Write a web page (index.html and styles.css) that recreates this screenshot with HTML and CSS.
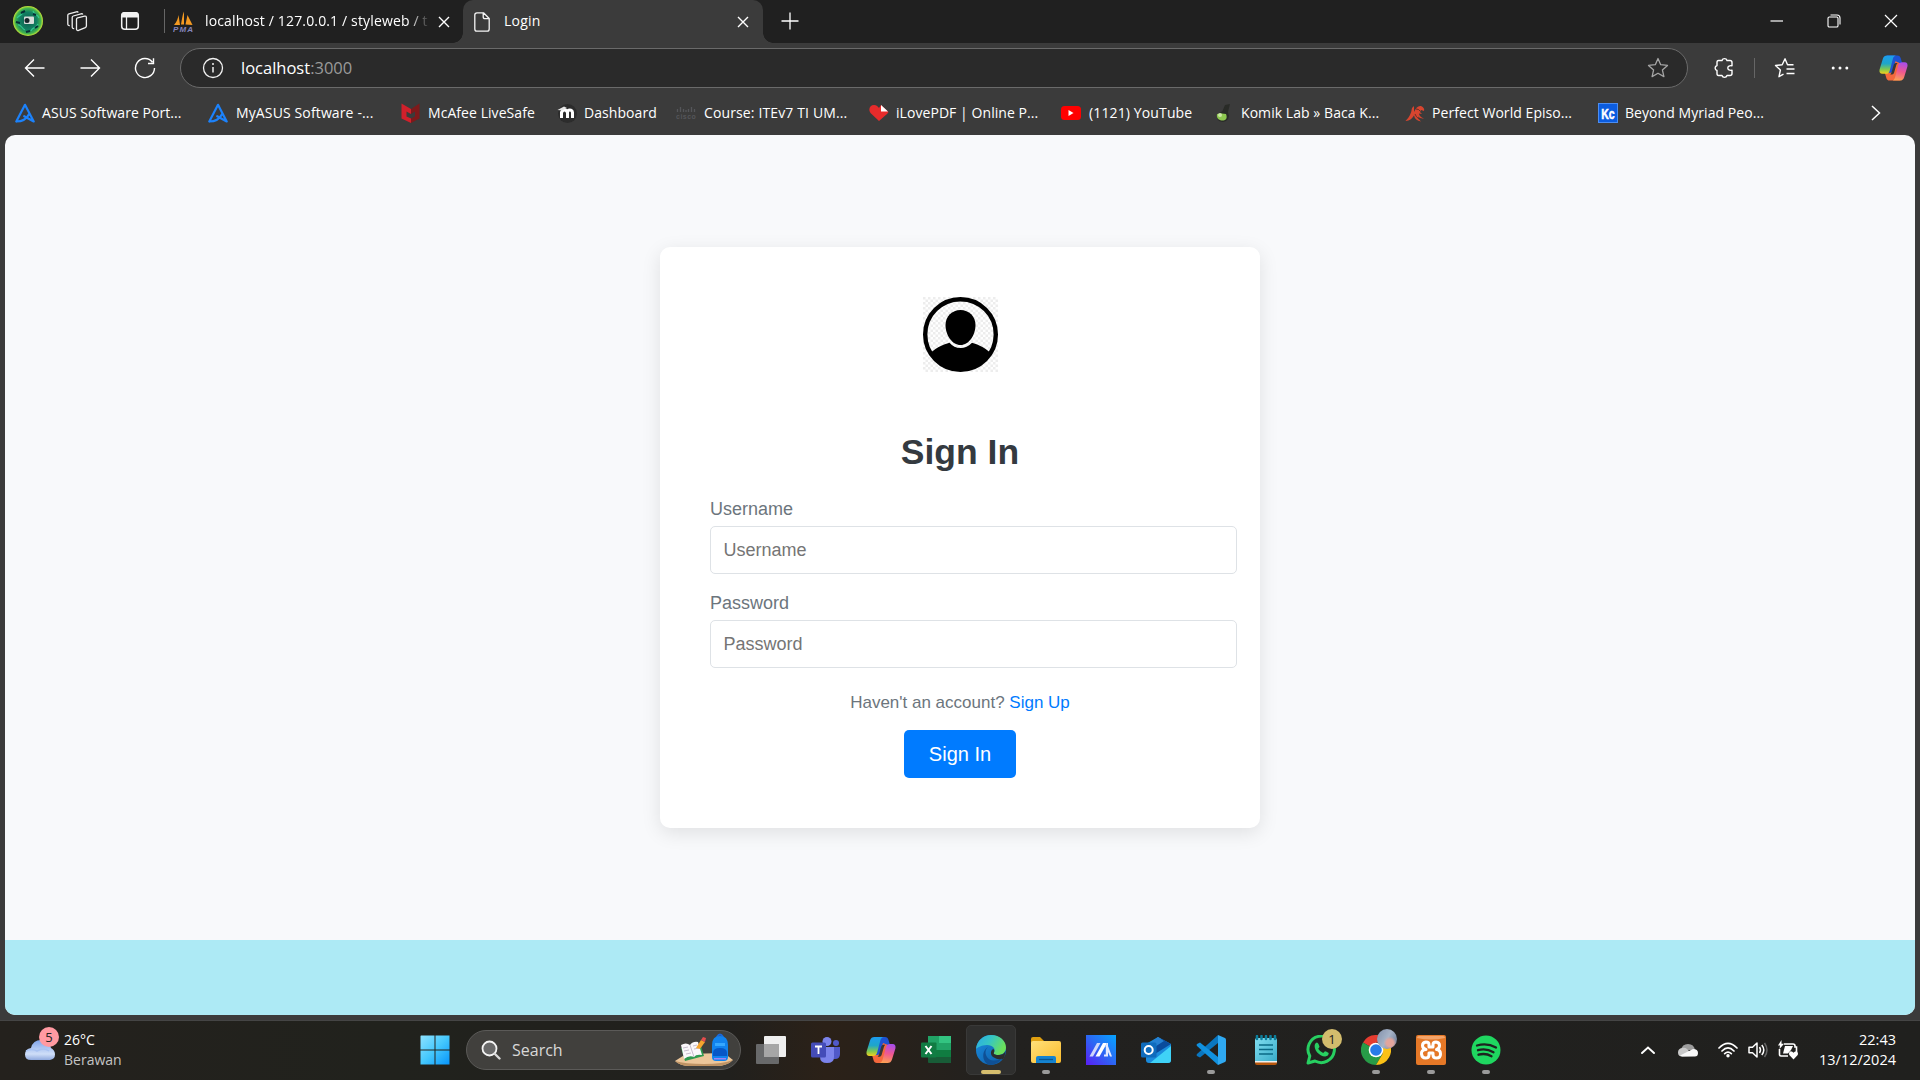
FILE: index.html
```html
<!DOCTYPE html>
<html lang="en">
<head>
<meta charset="utf-8">
<title>Login</title>
<link rel="stylesheet" href="styles.css">
</head>
<body>
<svg class="defs" width="0" height="0" aria-hidden="true">
  <defs>
    <linearGradient id="cpBlue" x1="0" y1="0" x2="0" y2="1"><stop offset="0" stop-color="#1c9cf0"/><stop offset=".45" stop-color="#1fa6c8"/><stop offset=".75" stop-color="#7fc950"/><stop offset="1" stop-color="#f4cf1c"/></linearGradient>
    <linearGradient id="cpPink" x1=".6" y1="0" x2=".4" y2="1"><stop offset="0" stop-color="#a84dea"/><stop offset=".5" stop-color="#f0588f"/><stop offset="1" stop-color="#fda053"/></linearGradient>
    <linearGradient id="win" x1="0" y1="0" x2="1" y2="1"><stop offset="0" stop-color="#8ee2ff"/><stop offset=".5" stop-color="#45c8fd"/><stop offset="1" stop-color="#0795fb"/></linearGradient>
    <linearGradient id="edgeTop" x1="0" y1="0" x2="1" y2=".4"><stop offset="0" stop-color="#2aa9e8"/><stop offset=".5" stop-color="#36c6c4"/><stop offset="1" stop-color="#6be05a"/></linearGradient>
    <linearGradient id="edgeLow" x1="0" y1="0" x2="1" y2="1"><stop offset="0" stop-color="#1b8ee0"/><stop offset="1" stop-color="#0c59a4"/></linearGradient>
    <linearGradient id="folder" x1="0" y1="0" x2="1" y2="1"><stop offset="0" stop-color="#ffe07a"/><stop offset="1" stop-color="#fbbc2c"/></linearGradient>
    <linearGradient id="asus" x1="0" y1="1" x2="1" y2="0"><stop offset="0" stop-color="#5a1df5"/><stop offset=".5" stop-color="#2c67f4"/><stop offset="1" stop-color="#05a5ff"/></linearGradient>
    <linearGradient id="cloud" x1="0" y1="0" x2="0" y2="1"><stop offset="0" stop-color="#7fa4ea"/><stop offset=".7" stop-color="#cfdef8"/><stop offset="1" stop-color="#8fa9de"/></linearGradient>
    <linearGradient id="note" x1="0" y1="0" x2="1" y2="1"><stop offset="0" stop-color="#82def0"/><stop offset="1" stop-color="#38acc9"/></linearGradient>
    <radialGradient id="avatar"><stop offset="0" stop-color="#0c5a4c"/><stop offset=".6" stop-color="#138263"/><stop offset=".85" stop-color="#44b44d"/><stop offset="1" stop-color="#c8e637"/></radialGradient>
    <pattern id="checker" width="5" height="5" patternUnits="userSpaceOnUse"><rect width="5" height="5" fill="#fff"/><path d="M0 0h2.500v2.500H0zM2.500 2.500H5V5H2.500z" fill="#ededed"/></pattern>
    <symbol id="copilot" viewBox="0 0 30 28">
      <path d="M8 1h11c2 0 3 1.300 3.500 3l1.500 5h-4c-2 0-3 1-3.500 3L13 22c-1 2-2 3-4 3z" fill="#1d52d2"/>
      <path d="M22 27H11c-2 0-3-1.200-3.500-3L6 19h5c2 0 3-1 3.500-3L17 7l5 2z" fill="#f4683c"/>
      <path d="M8.500 1H18c-2 0-3 1.500-3.500 3L11 17c-.6 2-2 3-4 3H3.500C1 20 0 18 .6 15.500L4 4.500C4.700 2 6.200 1 8.500 1z" fill="url(#cpBlue)"/>
      <path d="M21.500 27H13c2 0 3-1.500 3.500-3L20 11c.6-2 2-3 4-3h2.500c2.500 0 3.500 2 2.900 4.500L26 23.500c-.7 2.500-2.200 3.500-4.500 3.500z" fill="url(#cpPink)"/>
      <path d="M15.300 10.500q.5-1.700 2-1.700h2q-1 .8-1.400 2.200l-2.300 8q-.5 1.700-2 1.700h-2q1-.8 1.400-2.200z" fill="#383735"/>
    </symbol>
    <symbol id="asusA" viewBox="0 0 20 20"><path d="M1.300 18.500 10 1.800l8.700 16.700-9.500-5.300M1.300 18.500c6 0 10-2 12.500-7" fill="none" stroke="#1c82fb" stroke-width="2.200" stroke-linejoin="round" stroke-linecap="round"/></symbol>
    <symbol id="cross" viewBox="0 0 12 12"><path d="M1 1l10 10M11 1 1 11" fill="none" stroke="#fff" stroke-width="1.400"/></symbol>
  </defs>
</svg>

<header class="tabstrip">
  <svg class="avatar" width="30" height="30" viewBox="0 0 30 30"><circle cx="15" cy="15" r="15" fill="url(#avatar)"/><g fill="none" stroke="#33c98e" stroke-width="1.200"><path d="M4 12c3-4 5-2 6-6M20 5c1 4 5 3 6 7M5 19c3-1 4 4 7 5M18 25c1-4 6-3 7-7"/></g><path d="M8 7l4-2M3 16l4 1M22 22l3-2M13 26l4-1M20 8l3 1" stroke="#062f36" stroke-width="2"/><rect x="11" y="10.500" width="10" height="7.500" rx="1" fill="#d7ddda"/><circle cx="14" cy="14.500" r="2.500" fill="#17262b"/></svg>
  <svg class="workspaces" width="22" height="22" viewBox="0 0 22 22" fill="none" stroke="#eee" stroke-width="1.300" stroke-linejoin="round"><path d="M10.500 9.300c0-.8.4-1.300 1.100-1.500l7-1.700c1-.2 1.800.4 1.800 1.400v8.600c0 .8-.4 1.300-1.100 1.600l-6.800 2.700c-1.100.4-2-.2-2-1.300zM8.200 18.500c-1.200.2-2-.4-2-1.500V7.500c0-.8.4-1.300 1.100-1.500L15 3.800c.8-.2 1.500 0 1.800.8M3.800 15.500c-1.200.2-2-.4-2-1.500V5.300c0-.8.4-1.300 1.100-1.500l7.500-2c.8-.2 1.500 0 1.800.8"/></svg>
  <svg class="tabmenu" width="20" height="20" viewBox="0 0 20 20"><rect x="1.700" y="1.700" width="16.600" height="16.600" rx="3" fill="none" stroke="#f2f2f2" stroke-width="1.500"/><path d="M1.500 6.500V4q0-3 3-3h11q3 0 3 3v2.500z" fill="#f2f2f2"/><path d="M6.500 6v12" stroke="#f2f2f2" stroke-width="1.300"/></svg>
  <i class="strip-rule"></i>
  <div class="tab tab-idle">
    <svg width="20" height="22" viewBox="0 0 20 22"><path d="M1 14C4 11 5 7 5.500 4L7 14zM8 13.500c1-5 1.300-9.500 3-13v13zM12.500 13.500l2-9.500 3 6 2 4z" fill="#f49a22"/><text x="0" y="20.500" textLength="20" class="pma">PMA</text></svg>
    <span class="tab-title fade">localhost / 127.0.0.1 / styleweb / t</span>
    <svg width="12" height="12"><use href="#cross"/></svg>
  </div>
  <div class="tab tab-active">
    <svg width="16" height="20" viewBox="0 0 16 20" fill="none" stroke="#f5f5f5" stroke-width="1.300" stroke-linejoin="round"><path d="M3 .8h6.500l5.700 5.700V17q0 2.200-2.200 2.200H3Q.8 19.200.8 17V3Q.8.800 3 .8zM9.200 1v4q0 1.700 1.700 1.700h4.200"/></svg>
    <span class="tab-title">Login</span>
    <svg width="12" height="12"><use href="#cross"/></svg>
  </div>
  <svg class="newtab" width="18" height="18" viewBox="0 0 18 18"><path d="M9 .5v17M.5 9h17" stroke="#fff" stroke-width="1.300"/></svg>
  <div class="winctl">
    <svg width="14" height="14" viewBox="0 0 14 14"><path d="M.5 7h12.500" stroke="#fff" stroke-width="1.200"/></svg>
    <svg width="14" height="14" viewBox="0 0 14 14" fill="none" stroke="#fff" stroke-width="1.100"><rect x="1" y="3" width="10" height="10" rx="1.300"/><path d="M3.500 1H10q3 0 3 3v6.500"/></svg>
    <svg width="14" height="14" viewBox="0 0 14 14"><path d="M1 1l12 12M13 1 1 13" stroke="#fff" stroke-width="1.200"/></svg>
  </div>
</header>

<nav class="toolbar">
  <svg width="22" height="20" viewBox="0 0 22 20" fill="none" stroke="#fff" stroke-width="1.400"><path d="M20.500 10H1.500M10 1.500 1.500 10l8.500 8.500"/></svg>
  <svg width="22" height="20" viewBox="0 0 22 20" fill="none" stroke="#fff" stroke-width="1.400"><path d="M1.500 10h19M12 1.500l8.500 8.500-8.500 8.500"/></svg>
  <svg width="22" height="22" viewBox="0 0 22 22" fill="none" stroke="#fff" stroke-width="1.400"><path d="M18.500 5.200A9.500 9.500 0 1 0 20.500 11M19.500 1.200v5.300H14"/></svg>
  <div class="omnibox">
    <svg width="22" height="22" viewBox="0 0 22 22"><circle cx="11" cy="11" r="9.500" fill="none" stroke="#f2f2f2" stroke-width="1.300"/><path d="M11 10v5.500" stroke="#f2f2f2" stroke-width="1.500"/><circle cx="11" cy="7" r="1" fill="#f2f2f2"/></svg>
    <span class="url">localhost<em>:3000</em></span>
    <svg width="22" height="22" viewBox="0 0 22 22"><path d="M11 1.500l2.700 6.200 6.800.7-5.100 4.500 1.500 6.700L11 16.200l-5.900 3.400 1.500-6.700L1.500 8.400l6.800-.7z" fill="none" stroke="#a5a5a5" stroke-width="1.300" stroke-linejoin="round"/></svg>
  </div>
  <svg class="puzzle" width="20" height="22" viewBox="0 0 20 22"><path d="M4.500 3.500H8a2.600 2.600 0 0 1 5 0h3q2 0 2 2v3.300c-2.500-.5-4.200.5-4.200 2.200s1.700 2.700 4.200 2.200v3.300q0 2-2 2h-3a2.600 2.600 0 0 1-5 0H4.500q-1.500 0-1.500-2v-3a2.600 2.600 0 0 1 0-5v-3q0-2 1.500-2z" fill="none" stroke="#fff" stroke-width="1.400" stroke-linejoin="round"/></svg>
  <i class="tool-rule"></i>
  <svg class="favs" width="22" height="22" viewBox="0 0 22 22" fill="none" stroke="#fff" stroke-width="1.400" stroke-linejoin="round"><path d="M19.500 7.800h-6L11 1.800 8.200 7.700l-6.700.8 4.900 4.500L5 19.700l4.500-2.500M12.500 12h8M12.500 16.500h8"/></svg>
  <svg class="dots" width="18" height="6" viewBox="0 0 18 6" fill="#fff"><circle cx="2.200" cy="3" r="1.500"/><circle cx="9" cy="3" r="1.500"/><circle cx="15.800" cy="3" r="1.500"/></svg>
  <svg class="side-copilot" width="29" height="28"><use href="#copilot"/></svg>
</nav>

<div class="bookmarks">
  <a class="bm"><svg width="20" height="20"><use href="#asusA"/></svg><span>ASUS Software Port...</span></a>
  <a class="bm wide"><svg width="20" height="20"><use href="#asusA"/></svg><span>MyASUS Software -...</span></a>
  <a class="bm"><svg width="20" height="20" viewBox="0 0 20 20"><path d="M.5.500 10 6v5L5.500 8.500v5L10 15.500V20L.5 15.500z" fill="#d0202b"/><path d="M18.500.500 10 6v5l4-2.500v5l-4 2V20l8.500-4.500z" fill="#7d1a1b"/></svg><span>McAfee LiveSafe</span></a>
  <a class="bm"><svg width="20" height="20" viewBox="0 0 20 20"><circle cx="10.500" cy="10.500" r="9.500" fill="#2c2c2c"/><path d="M4.500 15V8.500M10.500 15V9.500q0-2.500 2.300-2.500t2.700 2.500V15M4.500 10q.5-3 3-3t3 3" fill="none" stroke="#fff" stroke-width="3"/><path d="M.5 7 7 3.500 10 5 5 7.500z" fill="#e6e6e6"/></svg><span>Dashboard</span></a>
  <a class="bm wide"><svg width="20" height="20" viewBox="0 0 20 20"><path d="M1.500 6v3M4.500 4v5M7.500 6v3M10 7v2M12.500 6v3M15.500 4v5M18.500 6v3" stroke="#55565a" stroke-width="1.300"/><text x="0" y="16" textLength="20" class="cisco">cisco</text></svg><span>Course: ITEv7 TI UM...</span></a>
  <a class="bm"><svg width="20" height="20" viewBox="0 0 20 20"><path d="M10 18 2 10.500C-1.500 6.500 1 2 5 2c2.500 0 4 1.500 5 3l2-3 7.500 7q-.5 1-1.500 2z" fill="#e62b2b"/><path d="M12 2v6.500h7z" fill="#fff"/></svg><span>iLovePDF | Online P...</span></a>
  <a class="bm wide"><svg width="20" height="20" viewBox="0 0 20 20"><rect x="0" y="3" width="20" height="14" rx="3.500" fill="#f00"/><path d="M7.500 7v6l5-3z" fill="#fff"/></svg><span>(1121) YouTube</span></a>
  <a class="bm"><svg width="20" height="20" viewBox="0 0 20 20"><path d="M8.500 8 11 2l5-1-2 8q3 8-5 10-8-1-5-8z" fill="#292b27"/><path d="M3 11q5-1 9 0c2 5-1 6.500-3.500 6.500S2 16 3 11z" fill="#8ec850"/><circle cx="6" cy="12" r="2" fill="#cce8a5"/></svg><span>Komik Lab » Baca K...</span></a>
  <a class="bm"><svg width="20" height="20" viewBox="0 0 20 20" fill="#d6452f"><path d="M.5 18Q6 13 7 5l2-2v6q3-7 7-6 4 2 3 5l-3-1-1 2 2 2-3-.5q0 3 5 5-4 .5-6-2 0 3 3 5-6-1-7-6-3 5-8 5.500z"/><path d="M10 11q1 3 4 5M11 6q3 0 4 2" stroke="#6b2c25" fill="none"/></svg><span>Perfect World Episo...</span></a>
  <a class="bm"><svg width="20" height="20" viewBox="0 0 20 20"><rect x=".5" y=".5" width="19" height="19" fill="#0b5cdf" stroke="#4c8df0"/><text x="3.200" y="15.500" textLength="13.500" lengthAdjust="spacingAndGlyphs" class="kc">Kc</text></svg><span>Beyond Myriad Peo...</span></a>
  <svg class="more" width="10" height="16" viewBox="0 0 10 16"><path d="M1 1l7.500 7L1 15" fill="none" stroke="#fff" stroke-width="1.500"/></svg>
</div>

<main class="viewport">
  <section class="stage">
    <form class="card">
      <svg class="portrait" width="75" height="75" viewBox="0 0 75 75"><rect width="75" height="75" fill="url(#checker)"/><circle cx="37.500" cy="37.500" r="35.300" fill="none" stroke="#000" stroke-width="4.400"/><path d="M37.500 13c8.500 0 15 6.500 15 15 0 10-6.500 20-15 20s-15-10-15-20c0-8.500 6.500-15 15-15z"/><path d="M8.500 55Q15 49 26.500 45.700 31 51 37.500 51T49 45.700Q60 49 66.500 55 57 74 37.500 74T8.500 55z"/></svg>
      <h1>Sign In</h1>
      <label for="user">Username</label>
      <input id="user" type="text" placeholder="Username">
      <label for="pass">Password</label>
      <input id="pass" type="password" placeholder="Password">
      <p>Haven't an account? <a>Sign Up</a></p>
      <button type="button">Sign In</button>
    </form>
  </section>
  <footer class="band"></footer>
</main>

<div class="taskbar">
  <div class="weather">
    <svg width="36" height="32" viewBox="0 0 36 32"><path d="M7 30q-6 0-6-5.500T7 18q2-8 10-8t10 8q4 2 4 6.500T26 30z" fill="url(#cloud)"/><path d="M2 21q6-3 11 0 7-4 12 0" fill="none" stroke="#a9c3f2" stroke-width="1.500"/></svg>
    <b class="count">5</b>
    <div class="lines"><span>26°C</span><span class="dim">Berawan</span></div>
  </div>
  <svg class="start" width="30" height="30" viewBox="0 0 30 30"><path d="M1 .5h13.500v14H.5V1zM15.500.500h14v14h-14zM.5 15.500h14v14H.5zM15.500 15.500h14v14h-14z" fill="url(#win)"/></svg>
  <div class="search">
    <svg width="20" height="20" viewBox="0 0 20 20"><circle cx="8.500" cy="8.500" r="7" fill="#696969" stroke="#f4f4f4" stroke-width="1.800"/><path d="M13.500 13.500l5 5" stroke="#d9d9d9" stroke-width="2.400" stroke-linecap="round"/></svg>
    <span>Search</span>
    <svg width="58" height="34" viewBox="0 0 58 34"><path d="M0 28 11 21l38-1 9 7q-6 6-17 6H15Q5 33 0 28z" fill="#ecc69a"/><path d="M0 28q10 3 29 3t29-4q-6 6-17 6H15Q5 33 0 28z" fill="#bf9364"/><path d="M6 15l20-2 3 10-19 5z" fill="#2f9a50"/><path d="M6 12q5-3 9 0 3-4 8-3l4 13q-6-1-8 2-5-2-10 2z" fill="#faf7fa"/><path d="M15 12l4 12M8 15l5-1M9 18l5-1M11 21l5-1M18 13l4-1M19 16l5-1" stroke="#c7bdcd"/><path d="M21 15l5-8 4 2-5 7z" fill="#f7a52d"/><path d="M26 7l2-3 3 1-1 4z" fill="#e44d4d"/><path d="M42 4q3-5 6 0" fill="none" stroke="#1a68db" stroke-width="2"/><path d="M37 12q0-9 8-9t8 9v12q0 4-4 4h-8q-4 0-4-4z" fill="#1183ee"/><path d="M40 10h10v3H40z" fill="#36a8ff"/><path d="M38 20q0-5 7-5t7 5v3H38z" fill="#0757c6"/><path d="M39 25h12v1.500H39z" fill="#9c83f5"/></svg>
  </div>
  <div class="apps">
    <div class="app"><svg width="32" height="30" viewBox="0 0 32 30"><rect x="1" y="9" width="23" height="20" rx="1" fill="#68696a"/><rect x="9" y="1" width="22" height="21" rx="1" fill="#efefef"/><rect x="9" y="9" width="15" height="13" fill="#a6a6a6"/></svg></div>
    <div class="app"><svg width="30" height="30" viewBox="0 0 30 30"><circle cx="25" cy="8" r="3" fill="#5059c9"/><path d="M19 12h10v7q0 5-5 5h-5z" fill="#5059c9"/><circle cx="16" cy="6.500" r="4.500" fill="#7b83eb"/><path d="M9 12h14v10q0 6-7 6t-7-6z" fill="#7b83eb"/><rect x="0" y="7.500" width="15" height="15" rx="1.500" fill="#444cb8"/><path d="M4 11.500h7M7.500 11.500V19" stroke="#fff" stroke-width="1.800"/></svg></div>
    <div class="app"><svg width="30" height="28"><use href="#copilot"/></svg></div>
    <div class="app"><svg width="30" height="30" viewBox="0 0 30 30"><path d="M8 1h21q1 0 1 1v26H8q-1 0-1-1V2q0-1 1-1z" fill="#185c37"/><path d="M7 1h11v20H7z" fill="#21a366"/><path d="M18 1h12v7H18z" fill="#33c481"/><path d="M18 8h12v7H18z" fill="#21a366"/><path d="M7 15h23v7H7z" fill="#107c41"/><rect x="0" y="7.500" width="15.500" height="15" rx="1" fill="#117c43"/><path d="M4.500 11l6 8M10.500 11l-6 8" stroke="#fff" stroke-width="2"/></svg></div>
    <div class="app focused"><svg width="30" height="30" viewBox="0 0 30 30"><circle cx="15" cy="15" r="15" fill="url(#edgeLow)"/><path d="M0 14C1 5 8 0 15 0c9 0 15 6 15 12.500 0 5-4 7.500-8 7.500-3 0-5-1-4-2.500C20 14 17 10 11 10 5 10 1 13 0 14z" fill="url(#edgeTop)"/><path d="M18 17.500c-1 1.500 1 2.500 4 2.500 3.500 0 6-1 7.500-4l-1 6-1.500 2q-5 1.500-10-2c-3-2-2.500-7.500.5-8q1.500 1.500.5 3.500z" fill="#2b2c2c"/><path d="M12 12c-5 4-2 13 5 13.500q5 .5 9-2-5 6.500-11.500 6.500C7 29 4 17 12 12z" fill="#0f5095"/></svg><i></i></div>
    <div class="app open"><svg width="30" height="28" viewBox="0 0 30 28"><path d="M0 3q0-2 2-2h7l4 4v6H0z" fill="#e0a010"/><path d="M0 7q0-2 2-2h26q2 0 2 2v18q0 2-2 2H2q-2 0-2-2z" fill="url(#folder)"/><path d="M5 27v-5q0-2 2-2h16q2 0 2 2v5z" fill="#1583d0"/><path d="M8 23.500h14" stroke="#0b568f" stroke-width="1.300"/></svg><i></i></div>
    <div class="app"><svg width="30" height="30" viewBox="0 0 30 30"><rect width="30" height="30" fill="url(#asus)"/><path d="M3.500 21.500h3.500L14.500 8H11z" fill="#cfd6fb"/><path d="M9.500 21.500h4L21 8h-4z" fill="#fff"/><path d="M18 13.500 21 8h1v13.500h-4v-2h1.800v-8.500zM22 11l4 10.500h-2L22 17z" fill="#e3e9ff"/></svg></div>
    <div class="app"><svg width="30" height="30" viewBox="0 0 30 30"><path d="M5 9 17 2l13 7v16q0 3-3 3H8q-3 0-3-3z" fill="#1a8bdc"/><path d="M8 12 21 4l9 5-21 13z" fill="#0a4b9c"/><path d="M7 10 17 2l6 4-14 9z" fill="#2580d2"/><path d="M30 11v14q0 3-3 3H9z" fill="#3fd2f7"/><rect x="0" y="7.500" width="15.500" height="15" rx="1.500" fill="#0f6cbd"/><circle cx="7.700" cy="15" r="4" fill="none" stroke="#fff" stroke-width="2"/></svg></div>
    <div class="app open"><svg width="30" height="30" viewBox="0 0 30 30"><path d="M22 0v8L4 22.500 1 21q-1-1 0-2z" fill="#0a76bf"/><path d="M22 30v-8L4 7.500 1 9q-1 1 0 2z" fill="#1191df"/><path d="M22 0l7 3q1 .5 1 2v20q0 1.500-1 2l-7 3z" fill="#2fa9f2"/></svg><i></i></div>
    <div class="app"><svg width="24" height="30" viewBox="0 0 24 30"><path d="M1 25h22v3q0 2-2 2H3q-2 0-2-2z" fill="#b7570d"/><path d="M1 5q0-2 2-2h18q2 0 2 2v21H1z" fill="url(#note)"/><path d="M1 26h22v1.500H1z" fill="#eee"/><path d="M5 10h14M5 14.500h14M5 19h14" stroke="#0a6985" stroke-width="1.700"/><path d="M3 1v3M7.500 1v3M12 1v3M16.500 1v3M21 1v3" stroke="#0c7f9d" stroke-width="2.500" stroke-linecap="round"/></svg></div>
    <div class="app"><svg width="30" height="30" viewBox="0 0 30 30"><path d="M2 28l1.800-7A13.200 13.200 0 1 1 9 26z" fill="none" stroke="#27cf61" stroke-width="3" stroke-linejoin="round"/><path d="M9 9q2-3 3.500 0l1 2.500q0 1-1.300 2.200 2 3.300 5 4.300l1.500-1.500q.8-.6 4 1.500 0 3-3.500 3.500C13 21.500 7 14 9 9z" fill="#27cf61"/></svg><b class="wa-count">1</b></div>
    <div class="app open"><svg width="30" height="30" viewBox="0 0 30 30"><path d="M15 15 2 7.500A15 15 0 0 1 28 7.500H15z" fill="#e53c30"/><path d="M15 15 2 7.500a15 15 0 0 0 13 22.500l6.500-11z" fill="#279b47"/><path d="M15 30l6.500-11V7.500H28A15 15 0 0 1 15 30z" fill="#fbc116"/><circle cx="15" cy="15" r="7.300" fill="#fff"/><circle cx="15" cy="15" r="5.800" fill="#287be9"/></svg><b class="profile"></b><i></i></div>
    <div class="app open"><svg width="30" height="30" viewBox="0 0 30 30"><rect width="30" height="30" rx="2" fill="#e57827"/><path d="M1 3q0-2 2-2h24q2 0 2 2-14 3-28 0z" fill="#f4a46a"/><path d="M10 14.500q-3.500-1-3.500-4t3.500-3.500q3 0 3 2.500V12h4V9.500q0-2.500 3-2.500 3.500.5 3.500 3.500t-3 4q4 .5 4 4.500t-4 4q-3.500 0-3.500-3v-2h-4v2q0 3-3.500 3t-4-4 4.500-4.500z" fill="none" stroke="#fff" stroke-width="3" stroke-linejoin="round"/></svg><i></i></div>
    <div class="app open"><svg width="30" height="30" viewBox="0 0 30 30"><circle cx="15" cy="15" r="14.500" fill="#1fd760"/><path d="M6 10.500q10-3 19 2M7 15.200q8-2.300 15.500 2M7.500 19.700q7-2 13 1.500" fill="none" stroke="#1e2320" stroke-width="2.300" stroke-linecap="round"/></svg><i></i></div>
  </div>
  <div class="tray">
    <svg width="14" height="8" viewBox="0 0 14 8"><path d="M1 7l6-5.500L13 7" fill="none" stroke="#fff" stroke-width="1.900" stroke-linecap="round"/></svg>
    <svg class="onedrive" width="20" height="14" viewBox="0 0 20 14"><path d="M3 7Q4 1 10 1t7 6z" fill="#9d9d9d"/><path d="M4 13.500q-4 0-4-4T4 5q3-1 5 1l7 7z" fill="#c9c9c9"/><path d="M2 12.500 15 6q5 0 5 4t-4 3.500H4z" fill="#f8f8f8"/></svg>
    <svg class="wifi" width="20" height="16" viewBox="0 0 20 16"><path d="M1 6q9-9 18 0M4 9q6-6 12 0M6.700 11.700q3.300-3 6.600 0" fill="none" stroke="#fff" stroke-width="1.700" stroke-linecap="round"/><circle cx="10" cy="13.700" r="1.700" fill="#fff"/></svg>
    <svg class="sound" width="20" height="18" viewBox="0 0 20 18" fill="none" stroke="#fff" stroke-width="1.500" stroke-linejoin="round"><path d="M1 6.200h3.500L9 2v14l-4.500-4.200H1zM11.500 6q2 3 0 6M13.800 4q4 5 0 10"/><path d="M16.500 2q5 7 0 14" stroke="#666"/></svg>
    <svg class="battery" width="20" height="20" viewBox="0 0 20 20"><path d="M6 4h9q2 0 2 2v1h1.500v5M10 16H3q-1.500 0-1.500-1.500V9" fill="none" stroke="#fff" stroke-width="1.600"/><path d="M5 13.500 7 6h8l-2 4-3 3.500zM3.500 0 0 5.500h2L1.500 9 6 3.800H3.500z" fill="#fff"/><path d="M15.500 19.500 11.300 15q-1-3 1.500-3.700 1.700 0 2.700 1.500 1-1.500 2.700-1.500 2.500.7 1.500 3.700z" fill="#fff"/></svg>
    <div class="clock"><span>22:43</span><span>13/12/2024</span></div>
  </div>
</div>
</body>
</html>
```
FILE: styles.css
```css
* { box-sizing: border-box; }
html, body { height: 100%; }
body {
  margin: 0;
  display: flex;
  flex-direction: column;
  overflow: hidden;
  background: #3b3b3b;
  color: #fff;
  font-family: "Open Sans", "Noto Sans", sans-serif;
  font-size: 14px;
}
svg { display: block; flex: none; }
.defs { position: absolute; }

/* Tab strip */
.tabstrip { height: 43px; flex: none; display: flex; align-items: center; background: #202020; padding: 0 0 1px 13px; }
.workspaces { margin-left: 23px; }
.tabmenu { margin-left: 32px; }
.strip-rule { width: 1px; height: 24px; margin-left: 24px; background: #666; }
.tab { display: flex; align-items: center; height: 43px; align-self: flex-start; }
.tab-title { flex: 1; white-space: nowrap; overflow: hidden; line-height: 20px; padding-bottom: 1px; }
.tab-idle { width: 298px; padding: 0 13px 0 8px; }
.tab-idle .tab-title { margin: 0 6px 0 12px; letter-spacing: 0.15px; }
.fade { -webkit-mask-image: linear-gradient(90deg, #000 90%, transparent 99%); mask-image: linear-gradient(90deg, #000 90%, transparent 99%); }
.tab-active { position: relative; width: 300px; background: #3b3b3b; border-radius: 10px 10px 0 0; padding: 0 14px 0 11px; }
.tab-active .tab-title { margin-left: 14px; letter-spacing: 0.2px; }
.tab-active::before, .tab-active::after { content: ""; position: absolute; bottom: 0; width: 10px; height: 10px; }
.tab-active::before { left: -10px; background: radial-gradient(circle at 0 0, transparent 9.5px, #3b3b3b 10px); }
.tab-active::after { right: -10px; background: radial-gradient(circle at 100% 0, transparent 9.5px, #3b3b3b 10px); }
.newtab { margin-left: 18px; }
.winctl { margin-left: auto; display: flex; gap: 43px; padding-right: 22px; }
.pma { font: italic bold 8px "Liberation Sans", sans-serif; fill: #8585bd; }
.cisco { font: bold 7px "Liberation Sans", sans-serif; fill: #55565a; }
.kc { font: bold 14px "Liberation Sans", sans-serif; fill: #fff; stroke: #fff; stroke-width: .5px; }

/* Toolbar */
.toolbar { height: 49px; flex: none; display: flex; align-items: center; padding-left: 24px; }
.toolbar > svg + svg { margin-left: 33px; }
.omnibox { display: flex; align-items: center; width: 1508px; height: 40px; margin-left: 24px; padding: 0 18px 0 21px; border: 1px solid #6a6a6a; border-radius: 20px; background: #2a2a2a; }
.url { flex: 1; margin-left: 17px; font-size: 16.5px; line-height: 24px; }
.url em { font-style: normal; color: #9a9a9a; }
.puzzle { margin-left: 26px; }
.tool-rule { width: 1px; height: 20px; margin-left: 20px; background: #666; }
.favs { margin-left: 19px; }
.toolbar > .dots { margin-left: 35px; }
.toolbar > .side-copilot { margin-left: 30px; }

/* Bookmarks bar */
.bookmarks { height: 43px; flex: none; display: grid; grid-template-columns: 193px 193px 156px 119px 193px 192px 153px 191px 193px 273px 10px; align-items: center; padding: 0 0 1px 15px; }
.bm { display: flex; align-items: center; gap: 7px; line-height: 20px; white-space: nowrap; letter-spacing: 0.06px; }
.wide { gap: 8px; letter-spacing: 0.13px; }

/* Page */
.viewport { height: 880px; flex: none; margin: 0 5px; display: flex; flex-direction: column; overflow: hidden; border-radius: 10px; background: #f8f9fb; color: #6c757d; font-family: "Liberation Sans", Arial, sans-serif; }
.stage { flex: 1; display: flex; align-items: center; justify-content: center; }
.band { height: 75px; flex: none; background: #adeaf5; }
.card { width: 600px; height: 581px; padding: 50px; display: flex; flex-direction: column; background: #fff; border-radius: 10px; box-shadow: 0 5px 19px rgba(0, 0, 0, .1); }
.portrait { align-self: center; }
.card h1 { margin: 60px 0 26px; text-align: center; font-size: 35.5px; line-height: 41px; color: #343a40; }
.card label { font-size: 18px; line-height: 20px; margin-bottom: 7px; }
.card input { width: 527px; height: 48px; flex: none; margin: 0 0 19px; padding: 0 12px 0 12.5px; border: 1px solid #dee2e6; border-radius: 5px; background: #fff; font: 18px "Liberation Sans", Arial, sans-serif; }
.card input::placeholder { color: #757575; }
.card p { margin: 6px 0 17px; text-align: center; font-size: 17px; line-height: 20px; }
.card p a { color: #007bff; }
.card button { align-self: center; width: 112px; height: 48px; flex: none; padding: 0; border: 0; border-radius: 5px; background: #007bff; color: #fff; font: 20px "Liberation Sans", Arial, sans-serif; }

/* Taskbar */
.taskbar { flex: 1; display: flex; align-items: center; margin-top: 5px; padding-bottom: 1px; border-top: 1px solid #454545; background: linear-gradient(90deg, #24211d, #21221d 20%, #21201d 38%, #2b2118 43%, #22211f 52%, #20201e 100%); }
.weather { position: relative; display: flex; width: 396px; padding-left: 24px; gap: 4px; }
.lines { display: flex; flex-direction: column; line-height: 20px; font-size: 14px; }
.dim { color: #c4c4c4; }
.count, .wa-count { position: absolute; display: grid; place-items: center; width: 20px; height: 20px; border-radius: 50%; background: #ff9aa2; color: #222; font-size: 13px; line-height: 20px; font-weight: 400; }
.count { left: 39px; top: -3px; }
.start { margin-left: 24px; }
.search { display: flex; align-items: center; width: 275px; height: 40px; margin-left: 16px; padding: 0 7px 0 14px; border: 1px solid #5b5a58; border-radius: 20px; background: #41403d; color: #d8d8d8; font-size: 16px; }
.search span { flex: 1; margin-left: 11px; }
.apps { display: flex; gap: 5px; margin-left: 5px; }
.app { position: relative; display: grid; place-items: center; width: 50px; height: 50px; border-radius: 5px; }
.app i { position: absolute; left: 21px; bottom: 1px; width: 8px; height: 4px; border-radius: 2px; background: #9a9a9a; }
.focused { background: #2f2f2e; border: 1px solid #393938; }
.focused i { left: 14px; bottom: 0; width: 20px; background: #d5bd6e; }
.wa-count { left: 26px; top: 4px; background: #d3bc6d; }
.profile { position: absolute; left: 26px; top: 4px; width: 20px; height: 20px; border-radius: 50%; background: radial-gradient(circle at 65% 70%, #e3a59c 0 18%, transparent 34%), linear-gradient(120deg, #8190aa, #a7b4c8 50%, #60708e); }
.tray { display: flex; align-items: center; margin-left: auto; padding-right: 24px; }
.onedrive { margin-left: 23px; }
.wifi { margin-left: 20px; }
.sound { margin-left: 10px; }
.battery { margin-left: 10px; }
.clock { display: flex; flex-direction: column; width: 98px; text-align: right; line-height: 20px; font-size: 14.5px; }
```
